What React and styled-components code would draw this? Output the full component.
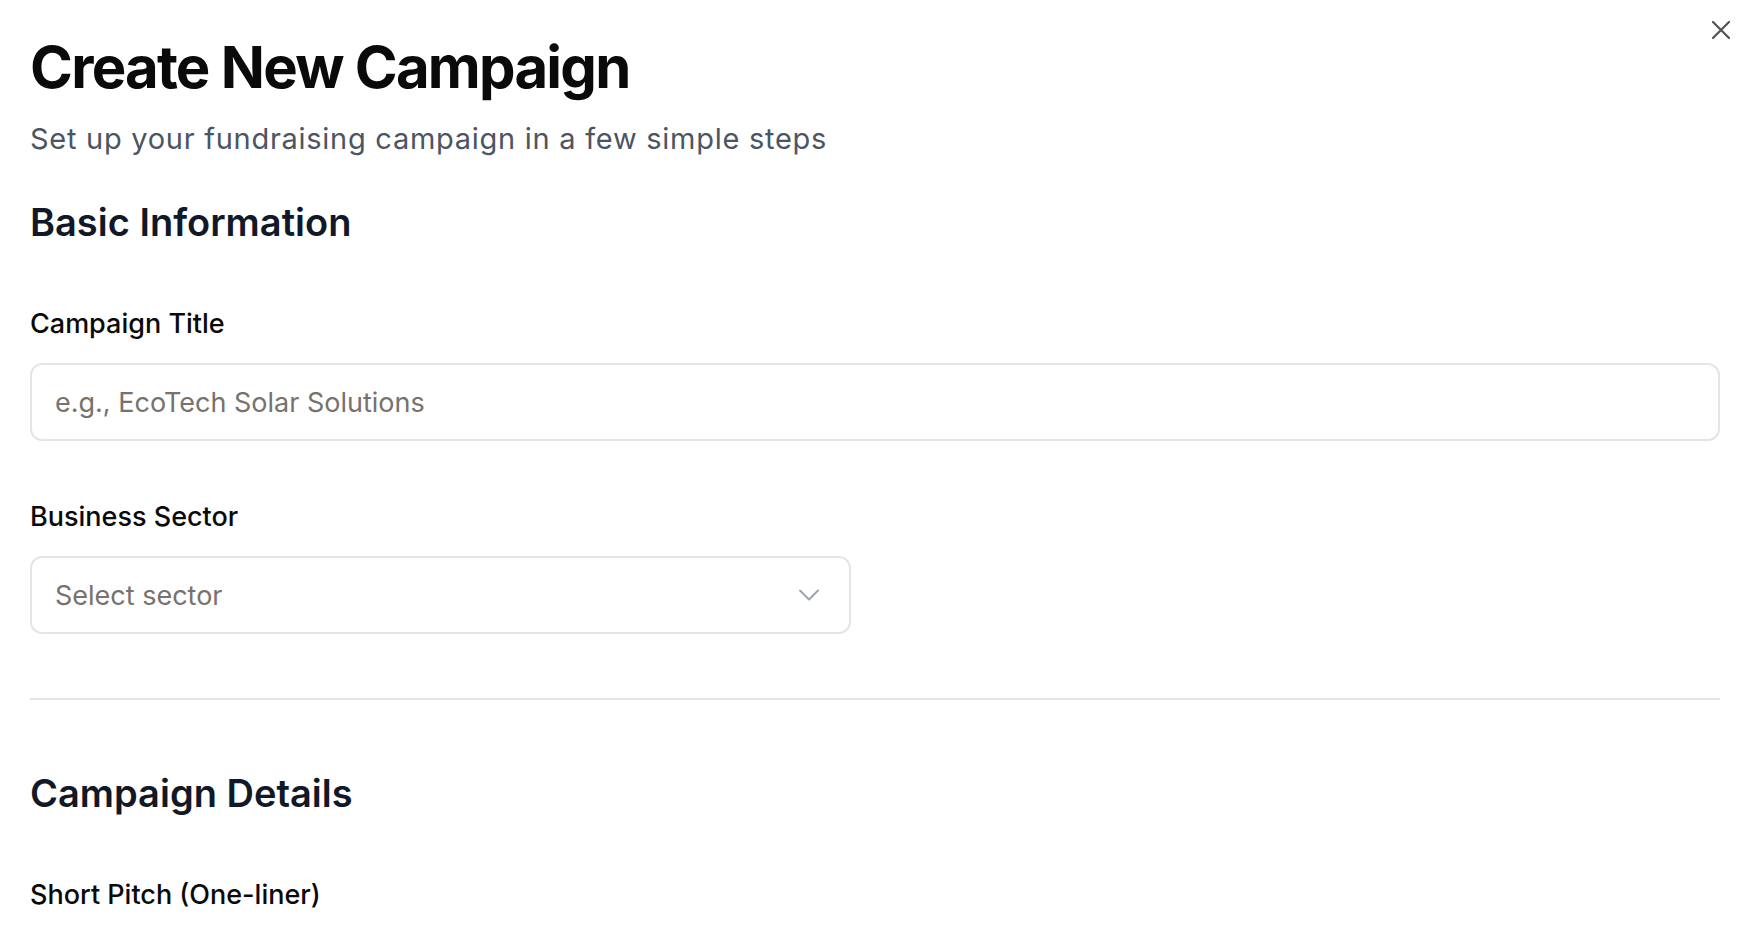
import styled, { createGlobalStyle } from "styled-components";

const GlobalStyle = createGlobalStyle`
  html, body {
    margin: 0;
    padding: 0;
    background: #ffffff;
  }
  body {
    font-family: Inter, "Noto Sans", "Liberation Sans", sans-serif;
    -webkit-font-smoothing: antialiased;
  }
  * {
    box-sizing: border-box;
  }
`;

export default function App() {
  return (
    <Page>
      <GlobalStyle />
      <CloseButton aria-label="Close">
        <svg width="20" height="20" viewBox="0 0 20 20" fill="none">
          <path d="M2 2L18 18M18 2L2 18" stroke="#525252" strokeWidth="2.2" strokeLinecap="round" />
        </svg>
      </CloseButton>

      <Title>Create New Campaign</Title>
      <Subtitle>Set up your fundraising campaign in a few simple steps</Subtitle>

      <Section>
        <SectionTitle>Basic Information</SectionTitle>
        <Fields>
          <Field>
            <Label>Campaign Title</Label>
            <TextInput placeholder="e.g., EcoTech Solar Solutions" />
          </Field>
          <Grid>
            <Field>
              <Label>Business Sector</Label>
              <SelectBox>
                <Placeholder>Select sector</Placeholder>
                <svg width="36" height="36" viewBox="0 0 24 24" fill="none">
                  <path d="m6 9 6 6 6-6" stroke="#9ca3af" strokeWidth="1.3" strokeLinecap="round" strokeLinejoin="round" />
                </svg>
              </SelectBox>
            </Field>
          </Grid>
        </Fields>
      </Section>

      <Divider />

      <Section>
        <SectionTitle>Campaign Details</SectionTitle>
        <Fields>
          <Field>
            <Label>Short Pitch (One-liner)</Label>
          </Field>
        </Fields>
      </Section>
    </Page>
  );
}

const Page = styled.div`
  position: relative;
  padding: 38px 24px 0 30px;
  height: 928px;
  overflow: hidden;
`;

const CloseButton = styled.button`
  position: absolute;
  top: 20px;
  right: 13px;
  width: 20px;
  height: 20px;
  padding: 0;
  border: none;
  background: none;
  display: flex;
  align-items: center;
  justify-content: center;
  cursor: pointer;
`;

const Title = styled.h1`
  margin: 0;
  font-size: 58px;
  line-height: 58px;
  font-weight: 700;
  letter-spacing: -0.03em;
  color: #0a0a0a;
`;

const Subtitle = styled.p`
  margin: 23px 0 0;
  font-size: 29px;
  line-height: 40px;
  font-weight: 400;
  letter-spacing: 0.025em;
  color: #4b5563;
`;

const Section = styled.section`
  display: flex;
  flex-direction: column;
  margin-top: 41px;
`;

const SectionTitle = styled.h2`
  margin: 0 0 62px;
  font-size: 38px;
  line-height: 44px;
  font-weight: 600;
  color: #111827;
`;

const Fields = styled.div`
  display: flex;
  flex-direction: column;
  gap: 58px;
`;

const Grid = styled.div`
  display: grid;
  grid-template-columns: 1fr 1fr;
  gap: 48px;
`;

const Field = styled.div`
  display: flex;
  flex-direction: column;
  gap: 21px;
`;

const Label = styled.label`
  font-size: 27px;
  line-height: 36px;
  font-weight: 500;
  color: #0a0a0a;
`;

const TextInput = styled.input`
  height: 78px;
  width: 100%;
  padding: 0 23px;
  border: 2px solid #e5e5e5;
  border-radius: 12px;
  font-family: inherit;
  font-size: 27px;
  color: #0a0a0a;
  background: #fff;
  outline: none;

  &::placeholder {
    color: #78716c;
  }
`;

const SelectBox = styled.div`
  height: 78px;
  display: flex;
  align-items: center;
  justify-content: space-between;
  padding: 0 22px 0 23px;
  border: 2px solid #e5e5e5;
  border-radius: 12px;
  background: #fff;
`;

const Placeholder = styled.span`
  font-size: 27px;
  color: #78716c;
`;

const Divider = styled.hr`
  margin: 64px 0 0;
  border: none;
  height: 2px;
  background: #e5e5e5;

  & + ${Section} {
    margin-top: 71px;
  }
`;
